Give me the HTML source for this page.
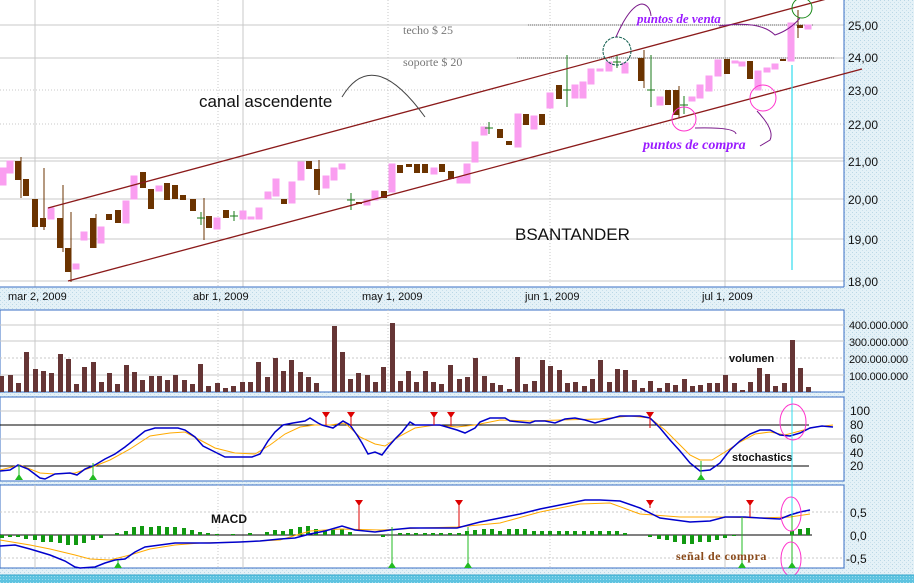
<!DOCTYPE html>
<html><head><meta charset="utf-8"><style>
html,body{margin:0;padding:0;background:#dcedf5;}
svg{display:block;font-family:"Liberation Sans",sans-serif;}
</style></head><body>
<svg width="914" height="583" viewBox="0 0 914 583" xmlns="http://www.w3.org/2000/svg">
<defs>
<pattern id="tx" width="4" height="4" patternUnits="userSpaceOnUse"><rect width="4" height="4" fill="#e4f1f7"/><rect width="1" height="1" fill="#b9d7e6"/><rect x="2" y="2" width="1" height="1" fill="#c8e0ec"/></pattern>
<pattern id="cy" width="3" height="3" patternUnits="userSpaceOnUse"><rect width="3" height="3" fill="#5ec3e0"/><rect width="1" height="1" fill="#9fdcef"/></pattern>
</defs>
<rect width="914" height="583" fill="url(#tx)"/>
<rect x="0" y="0" width="844" height="287" fill="#fff"/>
<g stroke="#c8c8c8" stroke-width="1">
<line x1="0" y1="25" x2="844" y2="25"/><line x1="0" y1="58" x2="844" y2="58"/>
<line x1="0" y1="90" x2="844" y2="90" stroke-dasharray="1 2"/><line x1="0" y1="124" x2="844" y2="124" stroke-dasharray="1 2"/>
<line x1="0" y1="158" x2="844" y2="158"/><line x1="0" y1="161" x2="844" y2="161"/>
<line x1="0" y1="199" x2="844" y2="199"/><line x1="0" y1="239" x2="844" y2="239"/><line x1="0" y1="281" x2="844" y2="281"/>
<line x1="35" y1="0" x2="35" y2="287"/><line x1="243" y1="0" x2="243" y2="287"/><line x1="725" y1="0" x2="725" y2="287"/>
<line x1="218" y1="0" x2="218" y2="287" stroke-dasharray="1 2"/><line x1="388" y1="0" x2="388" y2="287" stroke-dasharray="1 2"/><line x1="550" y1="0" x2="550" y2="287" stroke-dasharray="1 2"/>
</g>
<line x1="0" y1="287" x2="844" y2="287" stroke="#3a6fc4"/>
<line x1="844" y1="0" x2="844" y2="287" stroke="#3a6fc4"/>
<line x1="528" y1="25" x2="813" y2="25" stroke="#666" stroke-dasharray="1 1"/>
<line x1="517" y1="58" x2="835" y2="58" stroke="#666" stroke-dasharray="1 1"/>
<g fill="#fa9ef0" stroke="#fa9ef0">
<rect x="0" y="168" width="6" height="17"/><rect x="7" y="161" width="6" height="12"/><rect x="48" y="208" width="6" height="11"/><rect x="73" y="264" width="6" height="5"/><rect x="81" y="232" width="6" height="8"/><rect x="98" y="227" width="6" height="16"/><rect x="123" y="201" width="6" height="22"/><rect x="131" y="176" width="6" height="23"/><rect x="156" y="186" width="6" height="5"/><rect x="214" y="218" width="6" height="11"/><rect x="240" y="211" width="6" height="8"/><rect x="248" y="217" width="6" height="2"/><rect x="256" y="208" width="6" height="11"/><rect x="265" y="192" width="6" height="7"/><rect x="273" y="179" width="6" height="17"/><rect x="289" y="182" width="6" height="21"/><rect x="298" y="162" width="6" height="18"/><rect x="323" y="176" width="6" height="12"/><rect x="331" y="168" width="6" height="12"/><rect x="339" y="164" width="6" height="5"/><rect x="364" y="200" width="6" height="5"/><rect x="372" y="191" width="6" height="9"/><rect x="389" y="164" width="6" height="28"/><rect x="431" y="168" width="6" height="6"/><rect x="457" y="177" width="6" height="6"/><rect x="464" y="164" width="6" height="19"/><rect x="472" y="142" width="6" height="20"/><rect x="481" y="127" width="6" height="8"/><rect x="515" y="114" width="6" height="33"/><rect x="531" y="116" width="6" height="13"/><rect x="547" y="93" width="6" height="15"/><rect x="572" y="85" width="6" height="13"/><rect x="580" y="82" width="6" height="16"/><rect x="588" y="69" width="6" height="15"/><rect x="597" y="69" width="6" height="2"/><rect x="606" y="62" width="6" height="9"/><rect x="622" y="63" width="6" height="10"/><rect x="657" y="97" width="6" height="8"/><rect x="689" y="97" width="6" height="4"/><rect x="697" y="85" width="6" height="13"/><rect x="706" y="76" width="6" height="15"/><rect x="715" y="60" width="6" height="16"/><rect x="732" y="61" width="6" height="2"/><rect x="739" y="62" width="6" height="4"/><rect x="755" y="71" width="6" height="19"/><rect x="764" y="68" width="6" height="4"/><rect x="772" y="64" width="6" height="5"/><rect x="788" y="23" width="6" height="38"/><rect x="805" y="25" width="6" height="4"/>
</g>
<g stroke="#6b3300" stroke-width="1">
<line x1="21" y1="157" x2="21" y2="198"/><line x1="44" y1="168" x2="44" y2="230"/><line x1="63" y1="185" x2="63" y2="252"/><line x1="71" y1="212" x2="71" y2="282"/><line x1="96" y1="214" x2="96" y2="248"/><line x1="204" y1="198" x2="204" y2="240"/><line x1="319" y1="160" x2="319" y2="195"/><line x1="644" y1="50" x2="644" y2="88"/><line x1="679" y1="86" x2="679" y2="118"/><line x1="798" y1="10" x2="798" y2="38"/>
</g>
<g fill="#6b3300">
<rect x="15" y="161" width="6" height="19"/><rect x="23" y="179" width="6" height="17"/><rect x="32" y="199" width="6" height="28"/><rect x="40" y="218" width="6" height="9"/><rect x="57" y="218" width="6" height="30"/><rect x="65" y="248" width="6" height="24"/><rect x="90" y="218" width="6" height="30"/><rect x="106" y="214" width="6" height="6"/><rect x="115" y="210" width="6" height="13"/><rect x="140" y="172" width="6" height="16"/><rect x="148" y="189" width="6" height="20"/><rect x="164" y="183" width="6" height="17"/><rect x="172" y="185" width="6" height="14"/><rect x="180" y="195" width="6" height="5"/><rect x="190" y="199" width="6" height="12"/><rect x="206" y="216" width="6" height="12"/><rect x="223" y="210" width="6" height="8"/><rect x="281" y="199" width="6" height="5"/><rect x="306" y="161" width="6" height="8"/><rect x="314" y="169" width="6" height="21"/><rect x="356" y="202" width="6" height="2"/><rect x="381" y="191" width="6" height="7"/><rect x="397" y="165" width="6" height="8"/><rect x="406" y="164" width="6" height="3"/><rect x="414" y="164" width="6" height="9"/><rect x="422" y="164" width="6" height="9"/><rect x="439" y="164" width="6" height="8"/><rect x="448" y="171" width="6" height="8"/><rect x="497" y="129" width="6" height="9"/><rect x="506" y="141" width="6" height="4"/><rect x="523" y="114" width="6" height="11"/><rect x="539" y="114" width="6" height="11"/><rect x="556" y="85" width="6" height="14"/><rect x="638" y="58" width="6" height="23"/><rect x="665" y="90" width="6" height="15"/><rect x="673" y="90" width="6" height="25"/><rect x="724" y="59" width="6" height="15"/><rect x="747" y="61" width="6" height="18"/><rect x="780" y="59" width="6" height="2"/><rect x="797" y="25" width="6" height="3"/>
</g>
<g stroke="#1a7a1a"><path d="M201 212v13M197 218h8M234 211v10M230 216h8M351 193v17M347 200h8M489 122v12M485 128h8M567 55v52M563 90h8M617 55v13M613 62h8M651 55v52M647 90h8M684 96v18M680 105h8"/></g>
<g stroke="#8b1a1a" stroke-width="1.3" fill="none">
<line x1="48" y1="208" x2="860" y2="-10"/><line x1="68" y1="281" x2="862" y2="69"/>
</g>
<path d="M342 97 Q373 45 425 117" stroke="#444" fill="none"/>
<circle cx="617" cy="51" r="14" stroke="#0b5a4a" fill="none" stroke-dasharray="3 1"/>
<circle cx="802" cy="8" r="10" stroke="#1a8a1a" fill="none"/>
<circle cx="684" cy="119" r="12" stroke="#ff33cc" fill="none"/>
<circle cx="763" cy="98" r="13" stroke="#ff33cc" fill="none"/>
<path d="M616 37 Q630 5 642 4 Q650 5 651 16 M719 26 Q760 20 775 35 Q790 30 800 18 M695 128 Q735 127 736 134 M757 111 Q775 130 770 140 L760 146" stroke="#7a1a8a" fill="none"/>
<line x1="792" y1="65" x2="792" y2="270" stroke="#33ddee" stroke-width="1.2"/>
<text x="403" y="34" font-family="Liberation Serif,serif" font-size="12" fill="#777">techo   $ 25</text>
<text x="403" y="66" font-family="Liberation Serif,serif" font-size="12" fill="#777">soporte $ 20</text>
<text x="199" y="107" font-size="17" fill="#111">canal ascendente</text>
<text x="515" y="240" font-size="17" fill="#111">BSANTANDER</text>
<text x="637" y="23" font-size="13" font-weight="bold" font-style="italic" fill="#9a1aff" font-family="Liberation Serif,serif">puntos de venta</text>
<text x="643" y="149" font-size="14" font-weight="bold" font-style="italic" fill="#9a1aff" font-family="Liberation Serif,serif">puntos de compra</text>
<g font-size="12" fill="#111">
<text x="848" y="30">25,00</text><text x="848" y="62">24,00</text><text x="848" y="95">23,00</text><text x="848" y="129">22,00</text><text x="848" y="166">21,00</text><text x="848" y="204">20,00</text><text x="848" y="244">19,00</text><text x="848" y="286">18,00</text>
</g>
<g font-size="11" fill="#111"><text x="8" y="300">mar 2, 2009</text><text x="193" y="300">abr 1, 2009</text><text x="362" y="300">may 1, 2009</text><text x="525" y="300">jun 1, 2009</text><text x="702" y="300">jul 1, 2009</text></g>
<rect x="0" y="310" width="844" height="82" fill="#fff" stroke="#3a6fc4"/>
<g stroke="#c8c8c8"><line x1="0" y1="325" x2="844" y2="325"/><line x1="0" y1="341" x2="844" y2="341"/><line x1="0" y1="358" x2="844" y2="358" stroke-dasharray="2 2"/><line x1="0" y1="375" x2="844" y2="375"/><line x1="35" y1="310" x2="35" y2="392"/><line x1="243" y1="310" x2="243" y2="392"/><line x1="725" y1="310" x2="725" y2="392"/><line x1="218" y1="310" x2="218" y2="392" stroke-dasharray="1 2"/><line x1="388" y1="310" x2="388" y2="392" stroke-dasharray="1 2"/><line x1="550" y1="310" x2="550" y2="392" stroke-dasharray="1 2"/></g>
<g fill="#653535">
<rect x="0" y="376" width="4" height="16"/><rect x="8" y="375" width="5" height="17"/><rect x="16" y="383" width="5" height="9"/><rect x="24" y="352" width="5" height="40"/><rect x="33" y="369" width="5" height="23"/><rect x="41" y="371" width="5" height="21"/><rect x="49" y="373" width="5" height="19"/><rect x="58" y="354" width="5" height="38"/><rect x="66" y="359" width="5" height="33"/><rect x="74" y="384" width="5" height="8"/><rect x="82" y="367" width="5" height="25"/><rect x="91" y="362" width="5" height="30"/><rect x="99" y="382" width="5" height="10"/><rect x="107" y="373" width="5" height="19"/><rect x="115" y="384" width="5" height="8"/><rect x="124" y="365" width="5" height="27"/><rect x="132" y="372" width="5" height="20"/><rect x="140" y="380" width="5" height="12"/><rect x="149" y="376" width="5" height="16"/><rect x="157" y="376" width="5" height="16"/><rect x="165" y="380" width="5" height="12"/><rect x="173" y="375" width="5" height="17"/><rect x="182" y="380" width="5" height="12"/><rect x="190" y="384" width="5" height="8"/><rect x="198" y="364" width="5" height="28"/><rect x="206" y="386" width="5" height="6"/><rect x="215" y="383" width="5" height="9"/><rect x="223" y="388" width="5" height="4"/><rect x="231" y="386" width="5" height="6"/><rect x="240" y="382" width="5" height="10"/><rect x="248" y="382" width="5" height="10"/><rect x="256" y="362" width="5" height="30"/><rect x="265" y="377" width="5" height="15"/><rect x="273" y="358" width="5" height="34"/><rect x="281" y="371" width="5" height="21"/><rect x="289" y="360" width="5" height="32"/><rect x="298" y="372" width="5" height="20"/><rect x="306" y="377" width="5" height="15"/><rect x="314" y="383" width="5" height="9"/><rect x="332" y="326" width="5" height="66"/><rect x="340" y="352" width="5" height="40"/><rect x="348" y="379" width="5" height="13"/><rect x="356" y="373" width="5" height="19"/><rect x="365" y="375" width="5" height="17"/><rect x="373" y="382" width="5" height="10"/><rect x="381" y="367" width="5" height="25"/><rect x="390" y="323" width="5" height="69"/><rect x="398" y="381" width="5" height="11"/><rect x="406" y="371" width="5" height="21"/><rect x="414" y="382" width="5" height="10"/><rect x="423" y="371" width="5" height="21"/><rect x="431" y="382" width="5" height="10"/><rect x="439" y="384" width="5" height="8"/><rect x="448" y="365" width="5" height="27"/>
<rect x="457" y="379" width="5" height="13"/><rect x="465" y="377" width="5" height="15"/><rect x="473" y="358" width="5" height="34"/><rect x="482" y="376" width="5" height="16"/><rect x="490" y="383" width="5" height="9"/><rect x="498" y="385" width="5" height="7"/><rect x="507" y="389" width="5" height="3"/><rect x="515" y="357" width="5" height="35"/><rect x="523" y="384" width="5" height="8"/><rect x="532" y="381" width="5" height="11"/><rect x="540" y="360" width="5" height="32"/><rect x="548" y="366" width="5" height="26"/><rect x="557" y="370" width="5" height="22"/><rect x="565" y="383" width="5" height="9"/><rect x="573" y="382" width="5" height="10"/><rect x="582" y="386" width="5" height="6"/><rect x="590" y="379" width="5" height="13"/><rect x="598" y="360" width="5" height="32"/><rect x="607" y="382" width="5" height="10"/><rect x="615" y="369" width="5" height="23"/><rect x="623" y="370" width="5" height="22"/><rect x="632" y="380" width="5" height="12"/><rect x="640" y="388" width="5" height="4"/><rect x="648" y="381" width="5" height="11"/><rect x="657" y="388" width="5" height="4"/><rect x="665" y="383" width="5" height="9"/><rect x="673" y="385" width="5" height="7"/><rect x="682" y="379" width="5" height="13"/><rect x="690" y="386" width="5" height="6"/><rect x="698" y="385" width="5" height="7"/><rect x="707" y="383" width="5" height="9"/><rect x="715" y="383" width="5" height="9"/><rect x="723" y="375" width="5" height="17"/><rect x="732" y="383" width="5" height="9"/><rect x="740" y="390" width="5" height="2"/><rect x="748" y="382" width="5" height="10"/><rect x="757" y="368" width="5" height="24"/><rect x="765" y="374" width="5" height="18"/><rect x="773" y="386" width="5" height="6"/><rect x="782" y="383" width="5" height="9"/><rect x="790" y="340" width="5" height="52"/><rect x="798" y="368" width="5" height="24"/><rect x="806" y="387" width="5" height="5"/>
</g>
<text x="729" y="362" font-size="11" font-weight="bold" fill="#111">volumen</text>
<g font-size="11" fill="#111" letter-spacing="-0.2"><text x="849" y="329">400.000.000</text><text x="849" y="346">300.000.000</text><text x="849" y="363">200.000.000</text><text x="849" y="380">100.000.000</text></g>
<rect x="0" y="397" width="844" height="84" fill="#fff" stroke="#3a6fc4"/>
<g stroke="#c8c8c8"><line x1="0" y1="411" x2="844" y2="411"/><line x1="0" y1="439" x2="844" y2="439"/><line x1="0" y1="453" x2="844" y2="453"/><line x1="35" y1="397" x2="35" y2="481"/><line x1="243" y1="397" x2="243" y2="481"/><line x1="725" y1="397" x2="725" y2="481"/><line x1="218" y1="397" x2="218" y2="481" stroke-dasharray="1 2"/><line x1="388" y1="397" x2="388" y2="481" stroke-dasharray="1 2"/><line x1="550" y1="397" x2="550" y2="481" stroke-dasharray="1 2"/></g>
<line x1="0" y1="425" x2="809" y2="425" stroke="#000"/><line x1="0" y1="466" x2="809" y2="466" stroke="#000"/>
<polyline fill="none" stroke="#ffaa00" points="0,470 20,465 40,473 55,474 75,473 90,468 110,460 130,449 150,436 170,433 185,432 200,440 215,448 235,453 255,454 270,445 285,434 300,427 315,425 330,425 345,423 360,437 375,444 385,446 400,436 415,428 435,425 457,427 475,425 500,420 530,421 560,420 600,419 630,416 650,418 665,430 680,445 690,455 700,460 712,460 725,452 740,442 755,434 770,432 785,435 800,431 815,427 833,425"/>
<polyline fill="none" stroke="#0000cc" stroke-width="1.5" points="0,471 10,470 18,465 28,469 40,478 45,479 55,474 70,473 77,475 85,469 95,465 105,459 115,454 125,447 135,439 145,431 155,428 165,428 178,428 185,430 195,437 203,446 213,451 225,457 240,457 252,457 260,454 268,441 275,432 283,425 293,423 305,421 310,418 318,423 322,425 333,428 343,421 350,425 357,435 362,443 368,454 375,452 382,455 388,447 395,439 402,432 410,422 415,425 440,425 457,430 465,433 475,428 480,422 490,418 505,418 510,421 530,423 535,421 545,421 555,423 565,419 575,418 585,420 595,423 605,420 620,416 640,416 650,418 660,428 670,440 680,451 690,463 700,471 710,470 720,463 730,450 740,441 750,434 760,430 770,430 780,435 790,436 800,433 810,428 822,426 833,427"/>
<g stroke="#dd0000" fill="#dd0000"><path d="M326 412v13M351 412v14M434 412v13M451 412v14M650 412v16"/><path d="M322 412h8l-4 6zM347 412h8l-4 6zM430 412h8l-4 6zM447 412h8l-4 6zM646 412h8l-4 6z" stroke="none"/></g>
<g stroke="#22bb22" fill="#22bb22"><path d="M19 465v10M93 463v12M701 461v14"/><path d="M15 480l4-6 4 6zM89 480l4-6 4 6zM697 480l4-6 4 6z" stroke="none"/></g>
<text x="732" y="461" font-size="11" font-weight="bold" fill="#111">stochastics</text>
<g font-size="12" fill="#111"><text x="850" y="415">100</text><text x="850" y="429">80</text><text x="850" y="443">60</text><text x="850" y="457">40</text><text x="850" y="470">20</text></g>
<rect x="0" y="485" width="844" height="83" fill="#fff" stroke="#3a6fc4"/>
<g stroke="#c8c8c8"><line x1="0" y1="512" x2="844" y2="512" stroke-dasharray="2 2"/><line x1="0" y1="558" x2="844" y2="558" stroke-dasharray="2 2"/><line x1="35" y1="485" x2="35" y2="568"/><line x1="243" y1="485" x2="243" y2="568"/><line x1="725" y1="485" x2="725" y2="568"/><line x1="218" y1="485" x2="218" y2="568" stroke-dasharray="1 2"/><line x1="388" y1="485" x2="388" y2="568" stroke-dasharray="1 2"/><line x1="550" y1="485" x2="550" y2="568" stroke-dasharray="1 2"/></g>
<line x1="0" y1="535" x2="812" y2="535" stroke="#000"/>
<g fill="#119911">
<rect x="0" y="535" width="4" height="3"/><rect x="8" y="535" width="4" height="2"/><rect x="16" y="535" width="4" height="2"/><rect x="24" y="535" width="4" height="4"/><rect x="33" y="535" width="4" height="5"/><rect x="41" y="535" width="4" height="7"/><rect x="49" y="535" width="4" height="7"/><rect x="58" y="535" width="4" height="8"/><rect x="66" y="535" width="4" height="10"/><rect x="74" y="535" width="4" height="10"/><rect x="82" y="535" width="4" height="8"/><rect x="91" y="535" width="4" height="5"/><rect x="99" y="535" width="4" height="3"/><rect x="115" y="533" width="4" height="2"/><rect x="124" y="531" width="4" height="4"/><rect x="132" y="527" width="4" height="8"/><rect x="140" y="526" width="4" height="9"/><rect x="149" y="527" width="4" height="8"/><rect x="157" y="526" width="4" height="9"/><rect x="165" y="527" width="4" height="8"/><rect x="173" y="527" width="4" height="8"/><rect x="182" y="528" width="4" height="7"/><rect x="190" y="530" width="4" height="5"/><rect x="198" y="532" width="4" height="3"/><rect x="206" y="533" width="4" height="2"/><rect x="215" y="534" width="4" height="1"/><rect x="231" y="534" width="4" height="1"/><rect x="248" y="533" width="4" height="2"/><rect x="265" y="532" width="4" height="3"/><rect x="273" y="530" width="4" height="5"/><rect x="281" y="531" width="4" height="4"/><rect x="289" y="529" width="4" height="6"/><rect x="298" y="527" width="4" height="8"/><rect x="306" y="526" width="4" height="9"/><rect x="314" y="529" width="4" height="6"/><rect x="323" y="530" width="4" height="5"/><rect x="331" y="529" width="4" height="6"/><rect x="340" y="529" width="4" height="6"/><rect x="348" y="532" width="4" height="3"/><rect x="381" y="535" width="4" height="2"/><rect x="398" y="533" width="4" height="2"/><rect x="406" y="533" width="4" height="2"/><rect x="414" y="533" width="4" height="2"/><rect x="423" y="533" width="4" height="2"/><rect x="431" y="533" width="4" height="2"/><rect x="439" y="533" width="4" height="2"/><rect x="448" y="533" width="4" height="2"/>
<rect x="457" y="533" width="4" height="2"/><rect x="465" y="531" width="4" height="4"/><rect x="473" y="530" width="4" height="5"/><rect x="482" y="529" width="4" height="6"/><rect x="490" y="529" width="4" height="6"/><rect x="498" y="531" width="4" height="4"/><rect x="507" y="529" width="4" height="6"/><rect x="515" y="529" width="4" height="6"/><rect x="523" y="529" width="4" height="6"/><rect x="532" y="531" width="4" height="4"/><rect x="540" y="531" width="4" height="4"/><rect x="548" y="531" width="4" height="4"/><rect x="557" y="531" width="4" height="4"/><rect x="565" y="531" width="4" height="4"/><rect x="573" y="531" width="4" height="4"/><rect x="582" y="531" width="4" height="4"/><rect x="590" y="531" width="4" height="4"/><rect x="598" y="531" width="4" height="4"/><rect x="607" y="531" width="4" height="4"/><rect x="615" y="531" width="4" height="4"/><rect x="623" y="533" width="4" height="2"/><rect x="648" y="535" width="4" height="2"/><rect x="657" y="535" width="4" height="4"/><rect x="665" y="535" width="4" height="5"/><rect x="673" y="535" width="4" height="7"/><rect x="682" y="535" width="4" height="9"/><rect x="690" y="535" width="4" height="9"/><rect x="698" y="535" width="4" height="7"/><rect x="707" y="535" width="4" height="7"/><rect x="715" y="535" width="4" height="5"/><rect x="723" y="535" width="4" height="3"/><rect x="732" y="535" width="4" height="1"/><rect x="790" y="531" width="4" height="4"/><rect x="798" y="529" width="4" height="6"/><rect x="806" y="528" width="4" height="7"/>
</g>
<polyline fill="none" stroke="#ffaa00" points="0,540 30,545 50,549 75,555 90,559 110,560 130,555 150,549 175,545 200,543 240,542 280,540 310,531 340,529 380,530 420,528 457,527 500,523 540,512 580,504 610,503 640,514 680,517 700,517 720,517 760,518 790,517 810,514"/>
<polyline fill="none" stroke="#0000cc" stroke-width="1.5" points="0,546 15,545 30,549 50,555 65,561 75,567 80,568 95,567 105,563 115,560 125,559 135,552 145,547 160,545 175,543 210,543 240,542 260,541 280,539 295,538 310,534 325,531 342,526 355,530 375,532 390,530 410,528 457,528 480,522 500,518 520,514 540,509 555,506 570,503 585,500 600,500 620,501 640,508 660,518 690,522 710,521 725,517 745,517 760,518 780,519 790,515 800,512 810,510"/>
<g stroke="#dd0000" fill="#dd0000"><path d="M359 500v30M459 500v27M650 500v8M750 500v17"/><path d="M355 500h8l-4 6zM455 500h8l-4 6zM646 500h8l-4 6zM746 500h8l-4 6z" stroke="none"/></g>
<g stroke="#22bb22" fill="#22bb22"><path d="M118 560v6M392 527v39M468 527v39M742 517v49M792 515v51"/><path d="M114 568l4-6 4 6zM388 568l4-6 4 6zM464 568l4-6 4 6zM738 568l4-6 4 6zM788 568l4-6 4 6z" stroke="none"/></g>
<line x1="792" y1="397" x2="792" y2="515" stroke="#33ddee"/>
<ellipse cx="793" cy="422" rx="13" ry="18" stroke="#ff33cc" fill="none"/>
<ellipse cx="791" cy="514" rx="10" ry="17" stroke="#ff33cc" fill="none"/>
<ellipse cx="791" cy="559" rx="10" ry="17" stroke="#ff33cc" fill="none"/>
<text x="211" y="523" font-size="12" font-weight="bold" fill="#111">MACD</text>
<text x="676" y="560" font-size="12" font-weight="bold" fill="#8a4a1a" font-family="Liberation Serif,serif" letter-spacing="0.5">señal  de compra</text>
<g font-size="12" fill="#111"><text x="850" y="517">0,5</text><text x="850" y="540">0,0</text><text x="846" y="563">-0,5</text></g>
<rect x="0" y="575" width="914" height="8" fill="url(#cy)"/>
<line x1="0" y1="575" x2="914" y2="575" stroke="#3aa8cc"/>
</svg>
</body></html>
